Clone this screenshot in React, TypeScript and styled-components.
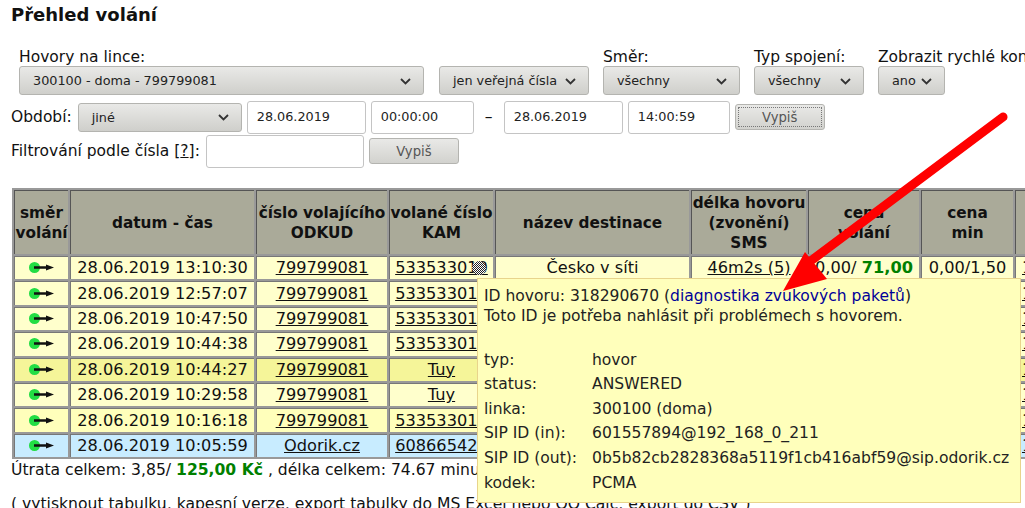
import React from "react";
import styled, { createGlobalStyle } from "styled-components";

const Global = createGlobalStyle`
  html, body { margin: 0; padding: 0; background: #fff; }
  body { width: 1025px; height: 508px; overflow: hidden; font-family: "DejaVu Sans", sans-serif; font-size: 16px; color: #111; }
`;

const Page = styled.div`
  position: relative;
  width: 1025px;
  height: 508px;
  overflow: hidden;
  padding: 5px 0 0 11px;
  box-sizing: border-box;
`;
const Title = styled.h1`
  margin: 0 0 25px;
  height: 20px;
  font-size: 18px;
  line-height: 20px;
  font-weight: 700;
  color: #111;
`;
const LineRow = styled.div`
  display: flex;
  align-items: flex-end;
  gap: 14px;
  padding-left: 8px;
  height: 50px;
  box-sizing: border-box;
  margin-top: -5px;
`;
const Field = styled.div<{ $extra?: number }>`
  display: flex;
  flex-direction: column;
  white-space: nowrap;
  margin-right: ${(p) => p.$extra ?? 0}px;
`;
const Label = styled.span`
  font-size: 15.5px;
  line-height: 20px;
  height: 19px;
`;
const SelectBox = styled.div<{ $w: number }>`
  position: relative;
  display: flex;
  align-items: center;
  width: ${(p) => p.$w}px;
  height: 29px;
  box-sizing: border-box;
  padding-left: 13px;
  border: 1px solid #b4b4b0;
  border-radius: 3px;
  background: linear-gradient(#e9e9e7, #cfcfcb);
  font-size: 12.8px;
  color: #222;
  flex: none;
`;
const Chevron = styled.svg`
  position: absolute;
  right: 12px;
  top: 50%;
  margin-top: -3px;
  width: 11px;
  height: 7px;
`;
const DateRow = styled.div<{ $top: number }>`
  display: flex;
  align-items: center;
  height: 34px;
  margin-top: ${(p) => p.$top}px;
`;
const InlineLabel = styled.span<{ $mr: number }>`
  font-size: 15.5px;
  margin-right: ${(p) => p.$mr}px;
  white-space: nowrap;
`;
const TextInput = styled.div<{ $w: number; $ml?: number }>`
  display: flex;
  align-items: center;
  width: ${(p) => p.$w}px;
  height: 33px;
  margin-left: ${(p) => p.$ml ?? 5}px;
  padding: 0 0 2px 9px;
  box-sizing: border-box;
  border: 1px solid #c4c4c4;
  border-radius: 3px;
  background: #fff;
  font-size: 12.8px;
  color: #222;
`;
const Dash = styled.span`
  width: 30px;
  text-align: center;
  font-size: 15.5px;
`;
const Btn = styled.div<{ $focus?: boolean }>`
  display: flex;
  align-items: center;
  justify-content: center;
  width: 90px;
  height: 26px;
  margin-left: 5px;
  box-sizing: border-box;
  border: 1px solid #b4b4b0;
  border-radius: 3px;
  background: linear-gradient(#e9e9e7, #d2d2ce);
  font-size: 13.2px;
  color: #555;
  ${(p) => (p.$focus ? "outline: 1px dotted #777; outline-offset: -4px;" : "")}
`;

const Table = styled.table`
  table-layout: fixed;
  width: 1105px;
  margin: 20px 0 0 1px;
  border-collapse: separate;
  border-spacing: 2px;
  background: #999;
  color: #111;
`;
const Th = styled.th`
  background: #aaaa99;
  border-top: 1px solid #555;
  border-left: 1px solid #555;
  padding: 0;
  height: 63px;
  font-size: 15.3px;
  line-height: 20px;
  font-weight: 700;
  text-align: center;
  white-space: nowrap;
  overflow: hidden;
`;
const Tr = styled.tr<{ $tone: string }>`
  td { background: ${(p) => p.$tone}; }
`;
const Td = styled.td`
  border-top: 1px solid #777;
  border-left: 1px solid #777;
  padding: 0;
  height: 22.4px;
  font-size: 16.2px;
  line-height: 20px;
  text-align: center;
  white-space: nowrap;
  overflow: hidden;
`;
const EdgeTd = styled(Td)`
  text-align: left;
  padding-left: 6px;
`;
const Green = styled.b`
  color: #008000;
`;
const Summary = styled.div`
  margin-top: 1px;
  font-size: 15.6px;
  line-height: 20px;
  white-space: nowrap;
`;
const Links = styled.div`
  margin-top: 14px;
  font-size: 15.6px;
  line-height: 20px;
  white-space: nowrap;
`;
const Tooltip = styled.div`
  position: absolute;
  left: 477px;
  top: 278px;
  width: 544px;
  height: 225px;
  box-sizing: border-box;
  padding: 8px 6px;
  background: #ffffbb;
  border: 1px solid #e8d48c;
  font-size: 15.55px;
  line-height: 19.5px;
  color: #222;
`;
const TipLink = styled.span`
  color: #000099;
`;
const TipTable = styled.div`
  margin-top: 22px;
  display: grid;
  grid-template-columns: 108px 1fr;
  grid-auto-rows: 24.6px;
  align-items: center;
  white-space: nowrap;
`;
const Overlay = styled.svg`
  position: absolute;
  left: 0;
  top: 0;
  width: 1025px;
  height: 508px;
  pointer-events: none;
`;
const DirIcon = styled.svg`
  display: block;
  margin: 0 auto;
  width: 25px;
  height: 12px;
`;

const Dir = () => (
  <DirIcon viewBox="0 0 25 12">
    <circle cx="5.5" cy="5.5" r="5.5" fill="#22dd44" />
    <path d="M5 4.3h12V2.5l8 3-8 3V6.7H5z" fill="#111" />
  </DirIcon>
);
const Chev = () => (
  <Chevron viewBox="0 0 11 7">
    <path d="M1 1l4.5 4.5L10 1" fill="none" stroke="#333" strokeWidth="1.8" />
  </Chevron>
);

const Y1 = "#ffffcc";
const Y2 = "#f5f599";
const Y3 = "#ffffbb";
const B = "#c8ecff";
const rows: [string, string, string, string][] = [
  [Y1, "28.06.2019 13:10:30", "799799081", "533533010"],
  [Y1, "28.06.2019 12:57:07", "799799081", "533533010"],
  [Y1, "28.06.2019 10:47:50", "799799081", "533533010"],
  [Y1, "28.06.2019 10:44:38", "799799081", "533533010"],
  [Y2, "28.06.2019 10:44:27", "799799081", "Tuy"],
  [Y1, "28.06.2019 10:29:58", "799799081", "Tuy"],
  [Y3, "28.06.2019 10:16:18", "799799081", "533533010"],
  [B, "28.06.2019 10:05:59", "Odorik.cz", "608665420"],
];
const widths = [54, 184, 131, 104, 194, 115, 111, 92, 100];

export default function App() {
  return (
    <Page>
      <Global />
      <Title>Přehled volání</Title>
      <LineRow>
        <Field $extra={1}>
          <Label>Hovory na lince:</Label>
          <SelectBox $w={405}>300100 - doma - 799799081<Chev /></SelectBox>
        </Field>
        <Field>
          <SelectBox $w={150}>jen veřejná čísla<Chev /></SelectBox>
        </Field>
        <Field>
          <Label>Směr:</Label>
          <SelectBox $w={137}>všechny<Chev /></SelectBox>
        </Field>
        <Field>
          <Label>Typ spojení:</Label>
          <SelectBox $w={110}>všechny<Chev /></SelectBox>
        </Field>
        <Field>
          <Label>Zobrazit rychlé kontakty:</Label>
          <SelectBox $w={67}>ano<Chev /></SelectBox>
        </Field>
      </LineRow>
      <DateRow $top={5}>
        <InlineLabel $mr={6}>Období:</InlineLabel>
        <SelectBox $w={164}>jiné<Chev /></SelectBox>
        <TextInput $w={119}>28.06.2019</TextInput>
        <TextInput $w={103}>00:00:00</TextInput>
        <Dash>–</Dash>
        <TextInput $w={119} $ml={0}>28.06.2019</TextInput>
        <TextInput $w={102}>14:00:59</TextInput>
        <Btn $focus>Vypiš</Btn>
      </DateRow>
      <DateRow $top={0}>
        <InlineLabel $mr={1}>Filtrování podle čísla [<u>?</u>]:</InlineLabel>
        <TextInput $w={158} />
        <Btn>Vypiš</Btn>
      </DateRow>
      <Table>
        <colgroup>
          {widths.map((w, i) => (
            <col key={i} style={{ width: w }} />
          ))}
        </colgroup>
        <thead>
          <tr>
            <Th>směr<br />volání</Th>
            <Th>datum - čas</Th>
            <Th>číslo volajícího<br />ODKUD</Th>
            <Th>volané číslo<br />KAM</Th>
            <Th>název destinace</Th>
            <Th>délka hovoru<br />(zvonění)<br />SMS</Th>
            <Th>cena<br />volání</Th>
            <Th>cena<br />min</Th>
            <Th />
          </tr>
        </thead>
        <tbody>
          {rows.map((r, i) => (
            <Tr key={i} $tone={r[0]}>
              <Td><Dir /></Td>
              <Td>{r[1]}</Td>
              <Td><u>{r[2]}</u></Td>
              <Td><u>{r[3]}</u></Td>
              <Td>{i === 0 ? "Česko v síti" : ""}</Td>
              <Td>{i === 0 ? <u>46m2s (5)</u> : ""}</Td>
              <Td>{i === 0 ? <>0,00/ <Green>71,00</Green></> : ""}</Td>
              <Td>{i === 0 ? "0,00/1,50" : ""}</Td>
              <EdgeTd><u>1</u></EdgeTd>
            </Tr>
          ))}
        </tbody>
      </Table>
      <Summary>
        Útrata celkem: 3,85/ <Green>125,00 Kč</Green> , délka celkem: 74.67 minut
      </Summary>
      <Links>
        ( <u>vytisknout tabulku</u>, <u>kapesní verze</u>, <u>export tabulky do MS Excel nebo OO Calc</u>, <u>export do CSV</u> )
      </Links>
      <Tooltip>
        ID hovoru: 318290670 (<TipLink>diagnostika zvukových paketů</TipLink>)
        <br />
        Toto ID je potřeba nahlásit při problémech s hovorem.
        <TipTable>
          <span>typ:</span><span>hovor</span>
          <span>status:</span><span>ANSWERED</span>
          <span>linka:</span><span>300100 (doma)</span>
          <span>SIP ID (in):</span><span>601557894@192_168_0_211</span>
          <span>SIP ID (out):</span><span>0b5b82cb2828368a5119f1cb416abf59@sip.odorik.cz</span>
          <span>kodek:</span><span>PCMA</span>
        </TipTable>
      </Tooltip>
      <Overlay viewBox="0 0 1025 508">
        <defs>
          <pattern id="dither" width="2" height="2" patternUnits="userSpaceOnUse">
            <rect width="2" height="2" fill="#fff" />
            <rect width="1" height="1" fill="#222" />
            <rect x="1" y="1" width="1" height="1" fill="#222" />
          </pattern>
        </defs>
        <circle cx="479" cy="268" r="7" fill="url(#dither)" />
        <path d="M1003 117L812 260" stroke="#ff0000" strokeWidth="9" strokeLinecap="round" fill="none" />
        <path d="M805 252L783 291L827 279Z" fill="#ff0000" />
      </Overlay>
    </Page>
  );
}
